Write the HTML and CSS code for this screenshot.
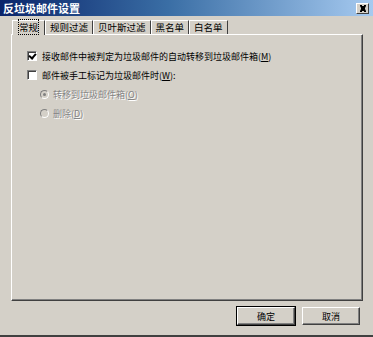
FILE: index.html
```html
<!DOCTYPE html>
<html>
  <head>
    <meta charset="utf-8">
    <title>反垃圾邮件设置</title>
    <link rel="stylesheet" href="styles.css">
  </head>
  <body>
    <div class="window">
      <div class="titlebar">
        <span class="title">反垃圾邮件设置</span>
        <span class="close">
          <svg width="8" height="7" viewBox="0 0 8 7"><path d="M1 0h2v1h2V0h2v1L6 3v1l1 2v1H5V6H3v1H1V6l1-2V3L1 1z" fill="#000"/></svg>
        </span>
      </div>
      <div class="tabs">
        <span class="tab active"><u>常规</u></span><span class="tab">规则过滤</span><span class="tab">贝叶斯过滤</span><span class="tab">黑名单</span><span class="tab">白名单</span>
      </div>
      <div class="panel">
        <label class="row">
          <span class="check on"></span>
          <span>接收邮件中被判定为垃圾邮件的自动转移到垃圾邮件箱(<u>M</u>)</span>
        </label>
        <label class="row">
          <span class="check"></span>
          <span>邮件被手工标记为垃圾邮件时(<u>W</u>):</span>
        </label>
        <label class="row sub disabled">
          <span class="radio on"></span>
          <span>转移到垃圾邮件箱(<u>O</u>)</span>
        </label>
        <label class="row sub disabled">
          <span class="radio"></span>
          <span>删除(<u>D</u>)</span>
        </label>
      </div>
      <div class="buttons">
        <button class="btn default">确定</button>
        <button class="btn">取消</button>
      </div>
    </div>
  </body>
</html>
```

FILE: styles.css
```css
* {
  box-sizing: border-box;
}
body {
  margin: 0;
  background: #d4d0c8;
  font-family: "Noto Sans CJK SC", "DejaVu Sans", sans-serif;
  font-size: 9px;
  color: #000;
}
.window {
  width: 373px;
  height: 337px;
  background: #d4d0c8;
  border-bottom: 2px solid #404040;
  position: relative;
}
.titlebar {
  height: 16px;
  background: linear-gradient(to right, #0a246a, #3a6ea5 45%, #a6caf0);
  display: flex;
  align-items: center;
  justify-content: space-between;
  padding: 0 4px 0 3px;
}
.title {
  color: #fff;
  font-weight: bold;
  font-size: 11px;
}
.close {
  width: 13px;
  height: 11px;
  background: #d4d0c8;
  border: 1px solid;
  border-color: #fff #404040 #404040 #fff;
  display: flex;
  align-items: center;
  justify-content: center;
}
.tabs {
  display: flex;
  padding-left: 12px;
  margin-top: 3px;
  height: 15px;
  align-items: flex-end;
}
.tab {
  height: 14px;
  padding: 0 4px;
  line-height: 13px;
  border: 1px solid;
  border-color: #fff #404040 transparent #fff;
  border-bottom: none;
  font-size: 9.5px;
}
.tab.active {
  height: 15px;
  margin-bottom: -1px;
  background: #d4d0c8;
  position: relative;
  z-index: 1;
  padding: 0 6px;
}
.tab.active u {
  text-decoration: none;
  outline: 1px dotted #000;
  outline-offset: 0;
}
.panel {
  margin: 0 10px 0 11px;
  height: 267px;
  border: 1px solid;
  border-color: #fff #404040 #404040 #fff;
  box-shadow: inset -1px -1px 0 #808080;
  padding: 16px 0 0 15px;
}
.row {
  display: flex;
  align-items: center;
  height: 10px;
  margin-bottom: 9px;
  gap: 5px;
}
.row.sub {
  padding-left: 13px;
  gap: 4px;
}
.disabled {
  color: #848484;
  text-shadow: 1px 1px 0 #fff;
}
.check {
  width: 10px;
  height: 10px;
  background: #fff;
  border: 1px solid;
  border-color: #808080 #fff #fff #808080;
  box-shadow: inset 1px 1px 0 #404040;
  position: relative;
}
.check.on::after {
  content: "";
  position: absolute;
  left: 2px;
  top: 0;
  width: 3px;
  height: 5px;
  border: solid #000;
  border-width: 0 2px 2px 0;
  transform: rotate(40deg);
}
.radio {
  width: 9px;
  height: 9px;
  border-radius: 50%;
  background: #d4d0c8;
  border: 1px solid;
  border-color: #808080 #fff #fff #808080;
  position: relative;
}
.radio.on::after {
  content: "";
  position: absolute;
  left: 2px;
  top: 2px;
  width: 3px;
  height: 3px;
  border-radius: 50%;
  background: #808080;
}
.buttons {
  display: flex;
  justify-content: flex-end;
  gap: 7px;
  padding: 6px 13px 0 0;
}
.btn {
  width: 58px;
  height: 18px;
  font: inherit;
  font-size: 9px;
  background: #d4d0c8;
  border: 1px solid;
  border-color: #fff #404040 #404040 #fff;
  box-shadow: inset -1px -1px 0 #808080;
  padding: 0;
}
.btn.default {
  outline: 1px solid #000;
  outline-offset: 0;
}
```
